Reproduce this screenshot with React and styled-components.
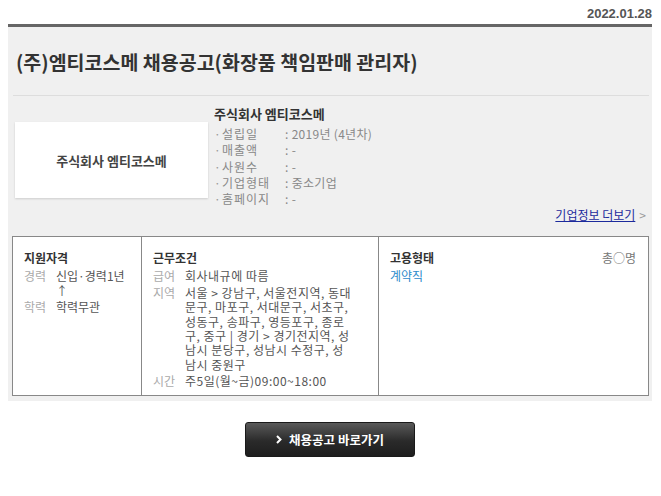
import React from 'react'
import styled, { createGlobalStyle } from 'styled-components'

const companyInfo = [
  { label: '설립일', value: '2019년 (4년차)' },
  { label: '매출액', value: '-' },
  { label: '사원수', value: '-' },
  { label: '기업형태', value: '중소기업' },
  { label: '홈페이지', value: '-' }
]

const qualification = [
  { label: '경력', value: '신입·경력1년 ↑' },
  { label: '학력', value: '학력무관' }
]

const conditions = [
  { label: '급여', value: '회사내규에 따름' },
  {
    label: '지역',
    value:
      '서울 > 강남구, 서울전지역, 동대문구, 마포구, 서대문구, 서초구, 성동구, 송파구, 영등포구, 종로구, 중구 | 경기 > 경기전지역, 성남시 분당구, 성남시 수정구, 성남시 중원구'
  },
  { label: '시간', value: '주5일(월~금)09:00~18:00' }
]

const App = () => {
  return (
    <>
      <GlobalStyle />
      <Page>
        <DateRow>2022.01.28</DateRow>
        <Panel>
          <Title>(주)엠티코스메 채용공고(화장품 책임판매 관리자)</Title>
          <CompanySection>
            <CompanyRow>
              <LogoBox>주식회사 엠티코스메</LogoBox>
              <InfoColumn>
                <CompanyName>주식회사 엠티코스메</CompanyName>
                <InfoList>
                  {companyInfo.map((item) => (
                    <InfoItem key={item.label}>
                      <Bullet>·</Bullet>
                      <InfoLabel>{item.label}</InfoLabel>
                      <InfoValue>: {item.value}</InfoValue>
                    </InfoItem>
                  ))}
                </InfoList>
              </InfoColumn>
            </CompanyRow>
            <MoreRow>
              <MoreLink href="#">기업정보 더보기</MoreLink>
              <Chevron>&gt;</Chevron>
            </MoreRow>
          </CompanySection>
          <Table>
            <Column>
              <ColumnTitle>지원자격</ColumnTitle>
              {qualification.map((item) => (
                <Item key={item.label}>
                  <ItemLabel>{item.label}</ItemLabel>
                  <ItemValue>{item.value}</ItemValue>
                </Item>
              ))}
            </Column>
            <Column>
              <ColumnTitle>근무조건</ColumnTitle>
              {conditions.map((item) => (
                <Item key={item.label}>
                  <ItemLabel>{item.label}</ItemLabel>
                  <ItemValue $spacing={0.5} $maxWidth={170}>
                    {item.value}
                  </ItemValue>
                </Item>
              ))}
            </Column>
            <Column>
              <HeadRow>
                <ColumnTitle>고용형태</ColumnTitle>
                <Count>총○명</Count>
              </HeadRow>
              <TypeText>계약직</TypeText>
            </Column>
          </Table>
        </Panel>
        <ButtonRow>
          <ApplyButton>
            <ButtonArrow viewBox="0 0 6 9">
              <path d="M1 1 L4.5 4.5 L1 8" stroke="#fff" strokeWidth="2" fill="none" />
            </ButtonArrow>
            채용공고 바로가기
          </ApplyButton>
        </ButtonRow>
      </Page>
    </>
  )
}

const GlobalStyle = createGlobalStyle`
  body {
    margin: 0;
    background: #fff;
    font-family: 'Noto Sans CJK KR', 'Noto Sans', sans-serif;
    font-size: 12px;
    color: #555;
  }
`

const Page = styled.div`
  width: 644px;
  padding: 0 9px 0 8px;
`

const DateRow = styled.div`
  height: 24px;
  line-height: 27px;
  text-align: right;
  font-family: 'Liberation Sans', Arial, sans-serif;
  font-weight: bold;
  font-size: 13px;
  color: #555;
`

const Panel = styled.div`
  background: #f0f0f0;
  border-top: 3px solid #666;
  padding: 0 2px 5px 4px;
`

const Title = styled.h1`
  margin: 0 1px;
  padding: 21px 3px 19px;
  line-height: 28px;
  font-size: 19.5px;
  font-weight: bold;
  color: #333;
  border-bottom: 1px solid #ddd;
`

const CompanySection = styled.div`
  display: flex;
  flex-direction: column;
`

const CompanyRow = styled.div`
  display: grid;
  grid-template-columns: 193px 1fr;
  gap: 6px;
  padding-left: 3px;
`

const LogoBox = styled.div`
  margin-top: 26px;
  height: 76px;
  background: #fff;
  box-shadow: 0 1px 2px rgba(0, 0, 0, 0.15);
  display: flex;
  align-items: center;
  justify-content: center;
  font-weight: bold;
  font-size: 13px;
  color: #444;
`

const InfoColumn = styled.div`
  padding-top: 7px;
`

const CompanyName = styled.div`
  line-height: 22px;
  font-weight: bold;
  font-size: 13px;
  color: #333;
`

const InfoList = styled.ul`
  list-style: none;
  margin: 1px 0 0;
  padding: 0;
`

const InfoItem = styled.li`
  display: grid;
  grid-template-columns: 8px 63px 1fr;
  line-height: 16.25px;
  font-size: 12px;
  color: #888;
`

const Bullet = styled.span`
  color: #999;
`

const InfoLabel = styled.span`
  letter-spacing: 1px;
`

const InfoValue = styled.span`
  letter-spacing: 0.3px;
`

const MoreRow = styled.div`
  display: flex;
  justify-content: flex-end;
  align-items: center;
  gap: 4px;
  line-height: 16px;
  padding-right: 4px;
`

const MoreLink = styled.a`
  color: #1c2a9c;
  text-decoration: underline;
  font-size: 12px;
`

const Chevron = styled.span`
  color: #999;
  font-size: 12px;
`

const Table = styled.div`
  margin-top: 13px;
  display: grid;
  grid-template-columns: 128px 237px 1fr;
  height: 160px;
  box-sizing: border-box;
  background: #fff;
  border: 1px solid #888;
  margin-right: 1px;
`

const Column = styled.div`
  padding: 13px 12px 0 11px;
  & + & {
    border-left: 1px solid #888;
    padding-left: 11px;
  }
`

const HeadRow = styled.div`
  display: flex;
  justify-content: space-between;
  align-items: flex-start;
`

const ColumnTitle = styled.div`
  line-height: 16px;
  margin-bottom: 3px;
  font-weight: bold;
  font-size: 12px;
  color: #333;
`

const Count = styled.span`
  color: #777;
  font-size: 12px;
  line-height: 16px;
`

const Item = styled.div`
  display: flex;
  gap: 8px;
  line-height: 14.4px;
  margin-bottom: 2.2px;
`

const ItemLabel = styled.span`
  flex: 0 0 24px;
  color: #aaa;
`

const ItemValue = styled.span`
  flex: 1;
  max-width: ${(p) => (p.$maxWidth ? `${p.$maxWidth}px` : 'none')};
  color: #555;
  letter-spacing: ${(p) => p.$spacing || 0}px;
  font-variant-emoji: text;
`

const TypeText = styled.div`
  line-height: 14.4px;
  color: #2b8bcb;
`

const ButtonRow = styled.div`
  display: flex;
  justify-content: center;
  padding-top: 21px;
`

const ApplyButton = styled.button`
  width: 170px;
  height: 35px;
  display: flex;
  align-items: center;
  justify-content: center;
  gap: 7px;
  border: 1px solid #1a1a1a;
  border-radius: 3px;
  background: linear-gradient(#595959, #2a2a2a 55%, #1e1e1e);
  color: #fff;
  font-family: 'Noto Sans CJK KR', sans-serif;
  font-weight: bold;
  font-size: 12.5px;
  cursor: pointer;
`

const ButtonArrow = styled.svg`
  width: 6px;
  height: 9px;
`

export default App
